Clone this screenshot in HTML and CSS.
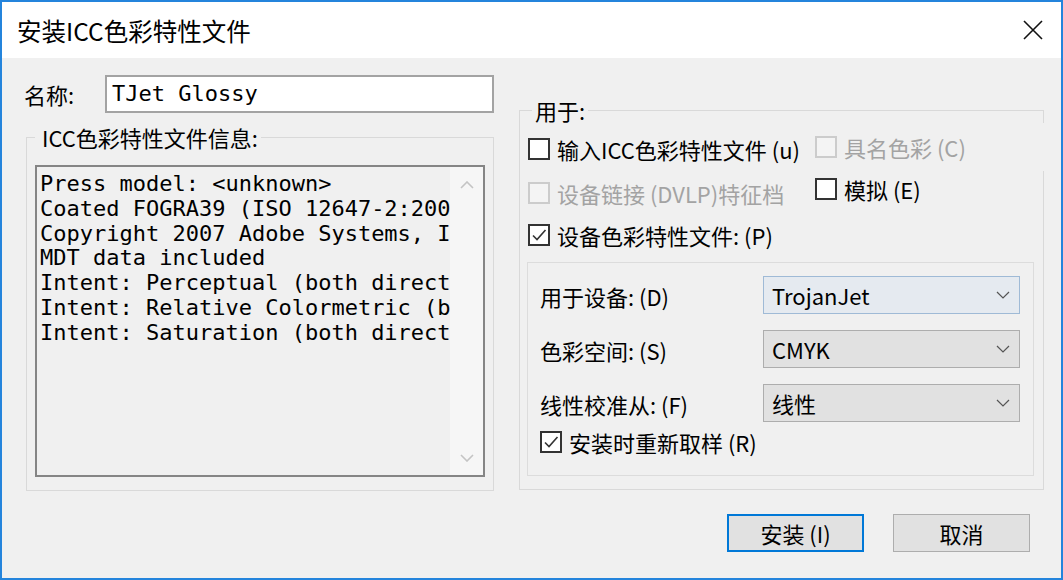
FILE: index.html
```html
<!DOCTYPE html>
<html lang="zh-CN">
<head>
<meta charset="utf-8">
<title>安装ICC色彩特性文件</title>
<link rel="stylesheet" href="styles.css">
</head>
<body>
<div class="window">
  <div class="titlebar">
    <span class="title">安装ICC色彩特性文件</span>
    <svg class="close" width="20" height="20" viewBox="0 0 20 20"><path d="M1 1 L19 19 M19 1 L1 19" stroke="#111" stroke-width="1.6" fill="none"/></svg>
  </div>
  <div class="content">
    <div class="main">
      <div class="leftcol">
        <div class="namerow">
          <span class="namelabel">名称:</span>
          <div class="input">TJet Glossy</div>
        </div>
        <fieldset class="group info">
          <legend>ICC色彩特性文件信息:</legend>
          <div class="textbox">
            <div class="text">Press model: &lt;unknown&gt;
Coated FOGRA39 (ISO 12647-2:2004)
Copyright 2007 Adobe Systems, Inc.
MDT data included
Intent: Perceptual (both directions)
Intent: Relative Colormetric (both directions)
Intent: Saturation (both directions)</div>
            <div class="scroll">
              <svg width="14" height="8" viewBox="0 0 14 8"><path d="M1 7 L7 1 L13 7" stroke="#c4c4c4" stroke-width="1.6" fill="none"/></svg>
              <svg width="14" height="8" viewBox="0 0 14 8"><path d="M1 1 L7 7 L13 1" stroke="#c4c4c4" stroke-width="1.6" fill="none"/></svg>
            </div>
          </div>
        </fieldset>
      </div>
      <fieldset class="group usage">
        <legend>用于:</legend>
        <div class="checks">
          <div class="check"><span class="box"></span>输入ICC色彩特性文件 (u)</div>
          <div class="check disabled named"><span class="box"></span>具名色彩 (C)</div>
          <div class="check disabled"><span class="box"></span>设备链接 (DVLP)特征档</div>
          <div class="check sim"><span class="box"></span>模拟 (E)</div>
          <div class="check span2"><span class="box"><svg width="18" height="18" viewBox="0 0 18 18"><path d="M3 9.5 L7 13.5 L15.5 4" stroke="#333" stroke-width="1.6" fill="none"/></svg></span>设备色彩特性文件: (P)</div>
        </div>
        <div class="device">
          <span class="dlabel">用于设备: (D)</span>
          <div class="select active"><span>TrojanJet</span><svg width="14" height="8" viewBox="0 0 14 8"><path d="M1 1 L7 7 L13 1" stroke="#555" stroke-width="1.2" fill="none"/></svg></div>
          <span class="dlabel">色彩空间: (S)</span>
          <div class="select"><span>CMYK</span><svg width="14" height="8" viewBox="0 0 14 8"><path d="M1 1 L7 7 L13 1" stroke="#555" stroke-width="1.2" fill="none"/></svg></div>
          <span class="dlabel">线性校准从: (F)</span>
          <div class="select"><span>线性</span><svg width="14" height="8" viewBox="0 0 14 8"><path d="M1 1 L7 7 L13 1" stroke="#555" stroke-width="1.2" fill="none"/></svg></div>
          <div class="check resample"><span class="box"><svg width="18" height="18" viewBox="0 0 18 18"><path d="M3 9.5 L7 13.5 L15.5 4" stroke="#333" stroke-width="1.6" fill="none"/></svg></span>安装时重新取样 (R)</div>
        </div>
      </fieldset>
    </div>
    <div class="buttons">
      <button class="btn default">安装 (I)</button>
      <button class="btn">取消</button>
    </div>
  </div>
</div>
</body>
</html>
```
FILE: styles.css
```css
* { box-sizing: border-box; }
html, body { margin: 0; padding: 0; }
body {
  width: 1063px;
  height: 580px;
  overflow: hidden;
  font-family: "Noto Sans CJK SC", "Noto Sans", sans-serif;
  font-size: 22px;
  color: #000;
  background: #fff;
}
.window {
  width: 1063px;
  height: 580px;
  border: 2px solid #2484dc;
  background: #f0f0f0;
  display: flex;
  flex-direction: column;
}
.titlebar {
  height: 56px;
  background: #fff;
  display: flex;
  align-items: center;
  justify-content: space-between;
  padding: 0 18px 0 15px;
}
.title {
  font-size: 24.5px;
  line-height: 30px;
  padding-top: 2px;
}
.close { display: block; }
.content {
  flex: 1;
  padding: 0 31px 0 22px;
  display: flex;
  flex-direction: column;
}
.main {
  display: grid;
  grid-template-columns: 470px 525px;
  column-gap: 25px;
  align-items: start;
}
.namerow {
  margin-top: 17px;
  height: 38px;
  display: flex;
  align-items: center;
}
.namelabel {
  width: 81px;
  line-height: 26px;
}
.input {
  width: 389px;
  height: 38px;
  border: 2px solid #a3a3a3;
  background: #fff;
  padding-left: 5px;
  font-family: "DejaVu Sans Mono", "Liberation Mono", monospace;
  font-size: 22px;
  line-height: 34px;
  color: #000;
}
.group {
  margin: 0;
  border: 1px solid #d9d9d9;
  min-width: 0;
}
.group legend {
  padding: 0 3px;
  line-height: 24px;
  font-size: 22px;
}
.info {
  margin: 12px 0 0 2px;
  padding: 16px 8px 13px 8px;
}
.info legend {
  padding-left: 7px;
}
.textbox {
  width: 450px;
  height: 312px;
  border: 2px solid #858585;
  background: #f0f0f0;
  display: flex;
}
.text {
  flex: 1;
  overflow: hidden;
  white-space: pre;
  padding: 5px 0 0 3px;
  font-family: "DejaVu Sans Mono", "Liberation Mono", monospace;
  font-size: 22px;
  line-height: 24.8px;
  color: #000;
}
.scroll {
  width: 33px;
  background: #f6f6f6;
  display: flex;
  flex-direction: column;
  justify-content: space-between;
  align-items: center;
  padding: 14px 0 13px;
}
.scroll svg { display: block; }
.usage {
  margin: 40px 0 0 0;
  padding: 4px 9px 13px 8px;
}
.usage legend {
  margin-left: 4px;
}
.checks {
  display: grid;
  grid-template-columns: 287px 1fr;
  grid-template-rows: 45px 43px 42px;
}
.check {
  display: flex;
  align-items: center;
  line-height: 26px;
  white-space: nowrap;
}
.box {
  width: 22px;
  height: 22px;
  border: 2px solid #333;
  background: #fff;
  margin-right: 7px;
  flex: none;
  display: flex;
  align-items: center;
  justify-content: center;
}
.box svg { display: block; }
.disabled { color: #a3a3a3; }
.disabled .box {
  border-color: #cccccc;
  background: #f4f4f4;
}
.named {
  align-self: stretch;
  margin-top: -3px;
  margin-right: -12px;
  background: #f0f0f0;
}
.sim {
  align-self: start;
  margin-top: 5px;
}
.span2 { grid-column: 1 / 3; }
.device {
  margin: 6px 0 0 -1px;
  border: 1px solid #dcdcdc;
  padding: 13px 13px 13px 12px;
  display: grid;
  grid-template-columns: 223px 257px;
  grid-template-rows: 38px 38px 38px 24px;
  row-gap: 16px;
  align-items: center;
}
.dlabel { line-height: 26px; padding-top: 1px; }
.select {
  height: 38px;
  border: 1px solid #adadad;
  background: #e1e1e1;
  display: flex;
  align-items: center;
  justify-content: space-between;
  padding: 0 9px 0 8px;
  line-height: 26px;
}
.select.active {
  border-color: #9fbad6;
  background: #e5eaf0;
}
.resample {
  grid-column: 1 / 3;
  align-self: start;
  height: 24px;
  margin-top: -8px;
}
.buttons {
  margin-top: 23px;
  display: flex;
  justify-content: flex-end;
  gap: 29px;
}
.btn {
  width: 137px;
  height: 38px;
  border: 1px solid #adadad;
  background: #e1e1e1;
  font-family: "Noto Sans CJK SC", "Noto Sans", sans-serif;
  font-size: 22px;
  line-height: 26px;
  color: #000;
  padding: 0;
}
.btn.default {
  border: 2px solid #0078d7;
}
```
